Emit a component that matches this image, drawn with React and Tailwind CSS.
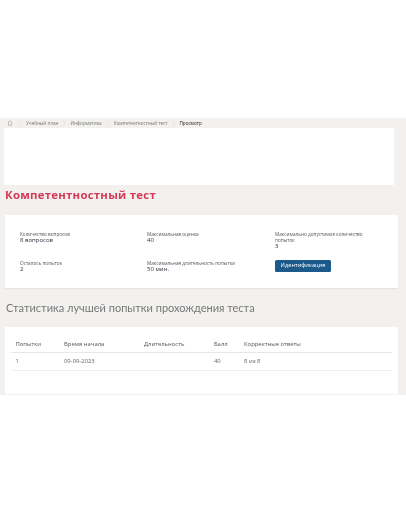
const crumbs = ['Учебный план', 'Информатика', 'Компетентностный тест']

const info = [
  { label: 'Количество вопросов', value: '8 вопросов' },
  { label: 'Максимальная оценка', value: '40' },
  { label: 'Максимально допустимое количество попыток', value: '3' },
  { label: 'Осталось попыток', value: '2' },
  { label: 'Максимальная длительность попытки', value: '50 мин.' },
]

function Chevron() {
  return (
    <svg width="4" height="6" viewBox="0 0 4 6" fill="none" stroke="#d4d4d4" strokeWidth="0.5">
      <path d="M0.5 0.5 3.2 3 0.5 5.5" />
    </svg>
  )
}

export default function App() {
  return (
    <div className="h-[516px] w-[406px] overflow-hidden bg-white font-['Open_Sans',sans-serif] antialiased blur-[0.3px]">
      <div className="mt-[118px] flex h-[277px] flex-col bg-[#f2f1ef]">
        {/* хлебные крошки */}
        <div className="flex h-[10px] items-center pl-[7px] text-[4.6px] text-[#777]">
          <svg className="mr-[1px]" width="6" height="6" viewBox="0 0 24 24" fill="none" stroke="#8a8f8f" strokeWidth="2">
            <path d="M3 11 12 3l9 8M6 9v12h12V9" />
          </svg>
          {crumbs.map(c => (
            <div key={c} className="flex items-center">
              <span className="mx-[4px]"><Chevron /></span>
              <span>{c}</span>
            </div>
          ))}
          <span className="mx-[4px]"><Chevron /></span>
          <span className="text-[#222]">Просмотр</span>
        </div>

        <div className="ml-[4px] h-[57px] w-[390px] bg-white" />

        <h1 className="ml-[5px] text-[11.4px] leading-[20px] font-bold tracking-[0.25px] text-[#d43a55]">
          Компетентностный тест
        </h1>

        <div className="ml-[5px] mt-[10px] grid h-[73px] w-[393px] grid-cols-[127px_128px_1fr] grid-rows-[29px_28px] bg-white pl-[15px] pt-[16px] shadow-[0_1px_1px_rgba(0,0,0,0.05)]">
          {info.map(item => (
            <div key={item.label} className="pr-[25px]">
              <div className="text-[4.7px] leading-[6px] text-[#555]">{item.label}</div>
              <div className="text-[6px] leading-[6px] text-[#2a3340]">{item.value}</div>
            </div>
          ))}
          <div>
            <button className="block h-[12px] w-[56px] rounded-[1.5px] bg-[#1c5a8c] text-[5.7px] leading-none text-white">
              Идентификация
            </button>
          </div>
        </div>

        <h2 className="ml-[6px] mt-[12px] font-['Lato',sans-serif] text-[11px] leading-[16px] text-[#777]">
          Статистика лучшей попытки прохождения теста
        </h2>

        <div className="ml-[5px] mt-[11px] h-[67px] w-[393px] bg-white px-[6px] pt-[10px]">
          <table className="w-[381px] table-fixed border-collapse text-left text-[5.9px] text-[#555]">
            <thead>
              <tr className="h-[15px] border-b border-[#e8e8e8]">
                <th className="w-[53px] pl-[4.5px] font-normal">Попытки</th>
                <th className="w-[80px] font-normal">Время начала</th>
                <th className="w-[70px] font-normal">Длительность</th>
                <th className="w-[30px] font-normal">Балл</th>
                <th className="font-normal">Корректные ответы</th>
              </tr>
            </thead>
            <tbody>
              <tr className="h-[18px] border-b border-[#efefef] text-[#666]">
                <td className="pl-[4.5px]">1</td>
                <td>09-09-2023</td>
                <td></td>
                <td>40</td>
                <td>8 из 8</td>
              </tr>
            </tbody>
          </table>
        </div>
      </div>
    </div>
  )
}
